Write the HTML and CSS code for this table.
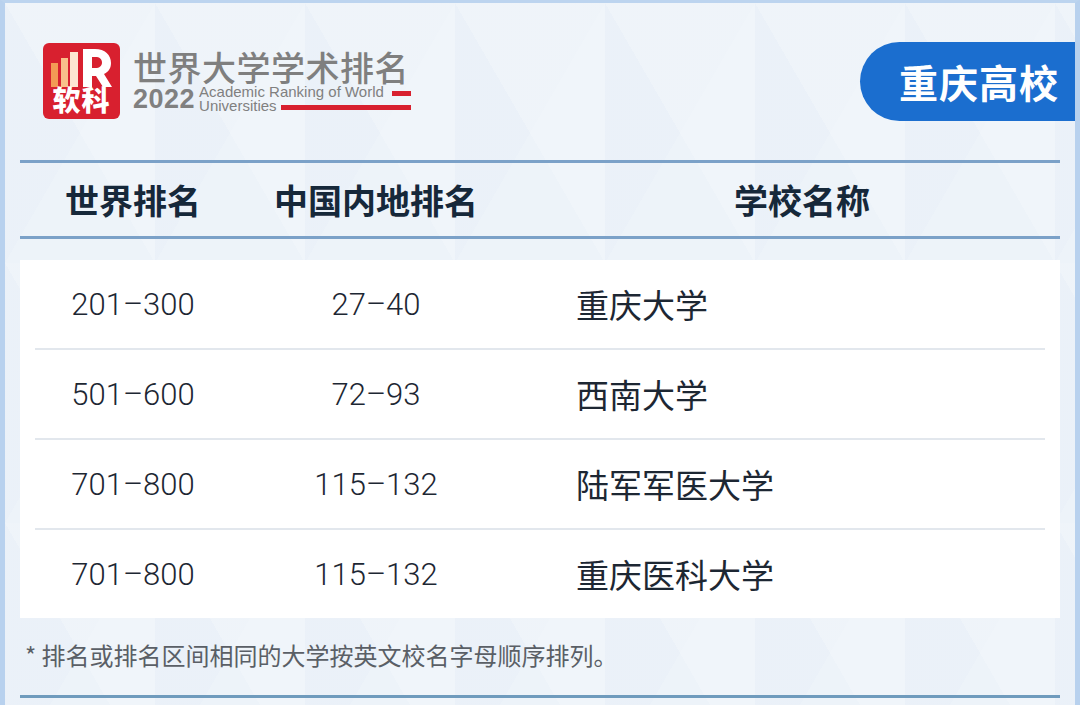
FILE: index.html
```html
<!DOCTYPE html>
<html lang="zh">
<head>
<meta charset="utf-8">
<title>重庆高校</title>
<link rel="stylesheet" href="styles.css">
</head>
<body>
<div class="frame">
  <div class="top">
    <div class="brand">
      <svg class="logo" width="77" height="76" viewBox="0 0 77 76">
        <rect x="0" y="0" width="77" height="76" rx="6" fill="#d8202f"/>
        <rect x="8" y="20" width="7" height="24" fill="#f39a55"/>
        <rect x="18" y="15" width="7" height="29" fill="#f8c08a"/>
        <rect x="27" y="9" width="8" height="35" fill="#fde6d2"/>
        <path d="M40 6 H52 C62 6 68 12 68 20 C68 26 65 29 61 31 L69 44 H60 L53 33 H49 V44 H40 Z M49 14 V25 H52.5 C56.5 25 59 23 59 19.5 C59 16 56.5 14 52.5 14 Z" fill="#ffffff"/>
        <text x="38.5" y="68" text-anchor="middle" class="logo-text">软科</text>
      </svg>
      <div class="title">
        <div class="title-cn">世界大学学术排名</div>
        <div class="title-sub">
          <span class="year">2022</span>
          <div class="title-en">
            <div class="en-line"><span>Academic Ranking of World</span><i class="bar short"></i></div>
            <div class="en-line"><span>Universities</span><i class="bar long"></i></div>
          </div>
        </div>
      </div>
    </div>
    <div class="badge">重庆高校</div>
  </div>

  <div class="rule"></div>
  <div class="head">
    <div class="c1">世界排名</div>
    <div class="c2">中国内地排名</div>
    <div class="c3 hc3">学校名称</div>
  </div>
  <div class="rule"></div>

  <div class="table">
    <div class="row"><div class="c1 num">201–300</div><div class="c2 num">27–40</div><div class="c3 name">重庆大学</div></div>
    <div class="row"><div class="c1 num">501–600</div><div class="c2 num">72–93</div><div class="c3 name">西南大学</div></div>
    <div class="row"><div class="c1 num">701–800</div><div class="c2 num">115–132</div><div class="c3 name">陆军军医大学</div></div>
    <div class="row"><div class="c1 num">701–800</div><div class="c2 num">115–132</div><div class="c3 name">重庆医科大学</div></div>
  </div>

  <div class="note">* 排名或排名区间相同的大学按英文校名字母顺序排列。</div>
  <div class="rule bottom"></div>
</div>
</body>
</html>
```

FILE: styles.css
```css
* { box-sizing: border-box; }
html, body { margin: 0; padding: 0; }
body {
  width: 1080px;
  height: 705px;
  overflow: hidden;
  font-family: "Noto Sans CJK SC", "Noto Sans", sans-serif;
}
.frame {
  width: 1080px;
  height: 705px;
  border-top: 3px solid #bcd4ef;
  border-left: 5px solid #b8d1ee;
  border-right: 5px solid #b8d1ee;
  background-color: #edf3f9;
  background-image:
    linear-gradient(60deg, rgba(255,255,255,0) 50%, rgba(255,255,255,0.18) 50%),
    linear-gradient(-60deg, rgba(220,230,242,0) 50%, rgba(220,230,242,0.12) 50%);
  background-size: 150px 260px;
  display: flex;
  flex-direction: column;
  overflow: hidden;
}
.top {
  height: 157px;
  display: flex;
  justify-content: space-between;
  align-items: flex-start;
  padding-top: 39px;
}
.brand {
  display: flex;
  align-items: flex-start;
  margin-left: 38px;
  margin-top: 1px;
}
.logo { display: block; flex: none; }
.logo-text {
  font-family: "Noto Sans CJK SC", sans-serif;
  font-weight: 900;
  font-size: 28px;
  letter-spacing: 1px;
  fill: #ffffff;
}
.title {
  margin-left: 13px;
  display: flex;
  flex-direction: column;
  color: #7d7d7d;
}
.title-cn {
  font-size: 34px;
  font-weight: 500;
  line-height: 34px;
  letter-spacing: 0.5px;
  margin-top: 7px;
  color: #7f7f7f;
}
.title-sub {
  display: flex;
  align-items: flex-start;
  margin-top: 1px;
}
.year {
  font-family: "Liberation Sans", Arial, sans-serif;
  font-weight: bold;
  font-size: 27px;
  line-height: 24px;
  margin-top: 2px;
  letter-spacing: 0.5px;
  color: #808080;
}
.title-en {
  margin-left: 4px;
  display: flex;
  flex-direction: column;
  width: 212px;
}
.en-line {
  display: flex;
  align-items: center;
  font-family: "Liberation Sans", Arial, sans-serif;
  font-size: 15px;
  line-height: 14px;
  color: #808080;
}
.bar {
  display: block;
  height: 5px;
  background: #d8202f;
  flex: 1;
}
.bar.short { margin-left: 8px; margin-top: 3px; }
.bar.long { margin-left: 4px; margin-top: 3px; }
.badge {
  width: 215px;
  height: 79px;
  background: #1b6ecf;
  border-radius: 40px 0 0 40px;
  color: #ffffff;
  font-size: 39px;
  font-weight: 700;
  line-height: 79px;
  padding-left: 39px;
  letter-spacing: 1px;
}
.rule {
  height: 3px;
  margin: 0 15px;
  background: #7ba1c8;
  flex: none;
}
.head {
  height: 73px;
  margin: 0 15px;
  display: grid;
  grid-template-columns: 226px 260px 1fr;
  align-items: center;
  font-size: 34px;
  font-weight: 700;
  color: #16283a;
}
.c1, .c2 { text-align: center; }
.hc3 { text-align: center; padding-left: 38px; }
.table {
  margin: 21px 15px 0;
  background: #ffffff;
  height: 358px;
  display: flex;
  flex-direction: column;
}
.row {
  height: 90px;
  margin: 0 15px;
  border-bottom: 2px solid #e2e7ed;
  display: grid;
  grid-template-columns: 211px 260px 1fr;
  align-items: center;
}
.row:last-child { border-bottom: none; height: 88px; }
.num {
  font-family: Roboto, "Liberation Sans", Arial, sans-serif;
  font-weight: 300;
  font-size: 31px;
  color: #1d2733;
}
.row .c1 { margin-left: -15px; }
.name {
  padding-left: 70px;
  font-size: 33px;
  font-weight: 400;
  color: #1d2733;
}
.note {
  height: 77px;
  padding-left: 20px;
  padding-top: 22px;
  font-size: 24px;
  line-height: 30px;
  color: #5a5f66;
}
.rule.bottom { background: #6f9bbd; }
```
